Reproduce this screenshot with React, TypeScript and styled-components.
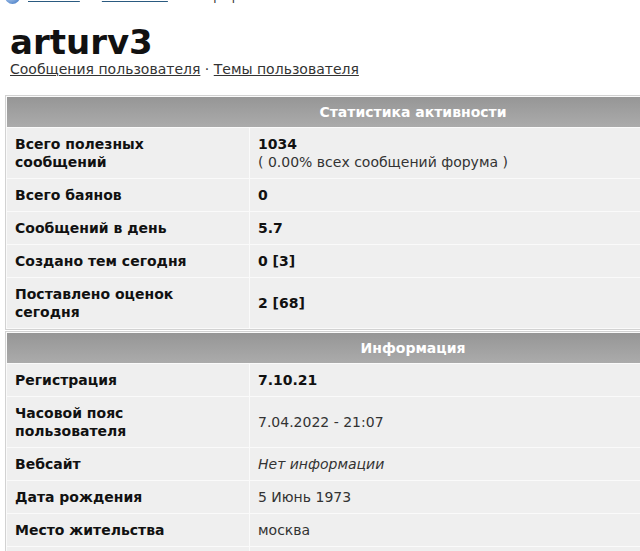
import styled, { createGlobalStyle } from "styled-components";

const GlobalStyle = createGlobalStyle`
  body {
    margin: 0;
    background: #fff;
    overflow: hidden;
    font-family: "DejaVu Sans", Verdana, sans-serif;
    color: #111;
  }
`;

const Page = styled.div`
  width: 640px;
  height: 551px;
  overflow: hidden;
  padding-left: 5px;
  box-sizing: border-box;
`;

const Crumbs = styled.div`
  display: flex;
  align-items: center;
  gap: 8px;
  height: 16px;
  margin-top: -12px;
  font-size: 12px;
  color: #333;
  a {
    color: #2a5a80;
    text-decoration: underline;
  }
  a + a {
    margin-left: 14px;
  }
  span:last-child {
    margin-left: 22px;
  }
`;

const Orb = styled.span`
  width: 15px;
  height: 15px;
  border-radius: 50%;
  background: radial-gradient(circle at 35% 35%, #cfe2f7, #5f8fd0 70%);
`;

const Title = styled.h1`
  margin: 19px 0 0 5px;
  font-size: 34px;
  line-height: 38px;
  font-weight: bold;
  color: #111;
`;

const UserLinks = styled.div`
  margin-left: 5px;
  font-size: 14px;
  line-height: 17px;
  color: #333;
  a {
    color: #333;
    text-decoration: underline;
  }
`;

const Section = styled.div<{ first?: boolean }>`
  width: 812px;
  margin-top: ${(p) => (p.first ? "17px" : "1px")};
  display: grid;
  grid-template-columns: 242px 1fr;
  gap: 1px;
  padding: 1px;
  background: #fafafa;
  border: 1px solid #d2d2d2;
`;

const Head = styled.div`
  grid-column: 1 / -1;
  height: 30px;
  display: flex;
  align-items: center;
  justify-content: center;
  background: linear-gradient(#969696, #ababab);
  color: #fff;
  font-size: 14px;
  font-weight: bold;
`;

const Cell = styled.div<{ bold?: boolean; italic?: boolean; label?: boolean }>`
  display: flex;
  flex-direction: column;
  justify-content: center;
  padding: 7px 8px;
  min-height: 18px;
  background: #efefef;
  font-size: 14px;
  line-height: 18px;
  font-weight: ${(p) => (p.bold || p.label ? "bold" : "normal")};
  font-style: ${(p) => (p.italic ? "italic" : "normal")};
  color: ${(p) => (p.label || p.bold ? "#111" : "#333")};
`;

const Note = styled.span`
  font-weight: normal;
  color: #333;
`;

type Row = {
  label: React.ReactNode;
  value: React.ReactNode;
  bold?: boolean;
  italic?: boolean;
};

const stats: Row[] = [
  {
    label: (
      <>
        Всего полезных
        <br />
        сообщений
      </>
    ),
    value: (
      <>
        <span>1034</span>
        <Note>( 0.00% всех сообщений форума )</Note>
      </>
    ),
    bold: true,
  },
  { label: "Всего баянов", value: "0", bold: true },
  { label: "Сообщений в день", value: "5.7", bold: true },
  { label: "Создано тем сегодня", value: "0 [3]", bold: true },
  {
    label: (
      <>
        Поставлено оценок
        <br />
        сегодня
      </>
    ),
    value: "2 [68]",
    bold: true,
  },
];

const info: Row[] = [
  { label: "Регистрация", value: "7.10.21", bold: true },
  {
    label: (
      <>
        Часовой пояс
        <br />
        пользователя
      </>
    ),
    value: "7.04.2022 - 21:07",
  },
  { label: "Вебсайт", value: "Нет информации", italic: true },
  { label: "Дата рождения", value: "5 Июнь 1973" },
  { label: "Место жительства", value: "москва" },
  { label: "Интересы", value: "Нет информации", italic: true },
];

const Block = ({ title, rows, first }: { title: string; rows: Row[]; first?: boolean }) => (
  <Section first={first}>
    <Head>{title}</Head>
    {rows.map((r, i) => (
      <>
        <Cell key={"l" + i} label>
          <div>{r.label}</div>
        </Cell>
        <Cell key={"v" + i} bold={r.bold} italic={r.italic}>
          {r.value}
        </Cell>
      </>
    ))}
  </Section>
);

export default function App() {
  return (
    <>
      <GlobalStyle />
      <Page>
        <Crumbs>
          <Orb />
          <a href="#">Главная</a>
          <a href="#">Участники</a>
          <span>· профиль</span>
        </Crumbs>
        <Title>arturv3</Title>
        <UserLinks>
          <a href="#">Сообщения пользователя</a> · <a href="#">Темы пользователя</a>
        </UserLinks>
        <Block title="Статистика активности" rows={stats} first />
        <Block title="Информация" rows={info} />
      </Page>
    </>
  );
}
